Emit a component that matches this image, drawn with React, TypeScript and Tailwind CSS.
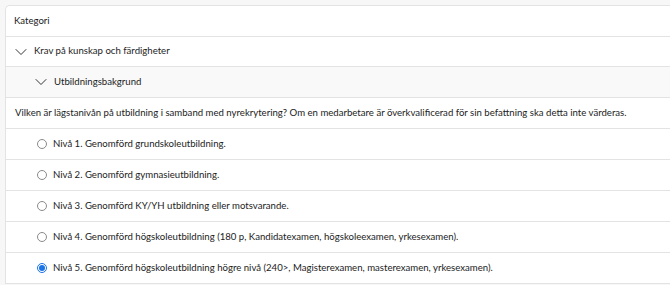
import { ChevronDown } from "lucide-react";

const options = [
  "Nivå 1. Genomförd grundskoleutbildning.",
  "Nivå 2. Genomförd gymnasieutbildning.",
  "Nivå 3. Genomförd KY/YH utbildning eller motsvarande.",
  "Nivå 4. Genomförd högskoleutbildning (180 p, Kandidatexamen, högskoleexamen, yrkesexamen).",
  "Nivå 5. Genomförd högskoleutbildning högre nivå (240>, Magisterexamen, masterexamen, yrkesexamen).",
];

function Radio({ checked }: { checked: boolean }) {
  if (checked) {
    return (
      <span className="w-[10px] h-[10px] rounded-full border border-[#1a73e8] bg-white flex items-center justify-center">
        <span className="w-[6px] h-[6px] rounded-full bg-[#1a73e8]" />
      </span>
    );
  }
  return <span className="w-[10px] h-[10px] rounded-full border border-[#8a8a8a] bg-white" />;
}

export default function App() {
  return (
    <div className="w-[670px] h-[285px] bg-[#f7f7f7] pt-[5px] pl-[5px] overflow-hidden font-['Lato',sans-serif] text-[9.6px] text-[#222]">
      <div className="bg-white border-t border-l border-[#e3e3e3] rounded-tl-[5px] w-[700px]">
        <div className="h-[31px] flex items-center pl-[8px] border-b border-[#e3e3e3]">Kategori</div>
        <div className="h-[30px] flex items-center pl-[5px] gap-[3px] border-b border-[#e3e3e3]">
          <ChevronDown className="w-[20px] h-[20px]" strokeWidth={1.1} />
          <span>Krav på kunskap och färdigheter</span>
        </div>
        <div className="h-[31px] flex items-center pl-[25px] gap-[3px] bg-[#f9f9f9] border-b border-[#e3e3e3]">
          <ChevronDown className="w-[20px] h-[20px]" strokeWidth={1.1} />
          <span>Utbildningsbakgrund</span>
        </div>
        <div className="h-[31px] flex items-center pl-[9px] border-b border-[#e3e3e3] whitespace-nowrap">
          Vilken är lägstanivån på utbildning i samband med nyrekrytering? Om en medarbetare är överkvalificerad för sin befattning ska detta inte värderas.
        </div>
        {options.map((o, i) => (
          <div key={i} className="h-[31px] flex items-center pl-[31px] gap-[6px] border-b border-[#e3e3e3]">
            <Radio checked={i === 4} />
            <span>{o}</span>
          </div>
        ))}
      </div>
    </div>
  );
}
